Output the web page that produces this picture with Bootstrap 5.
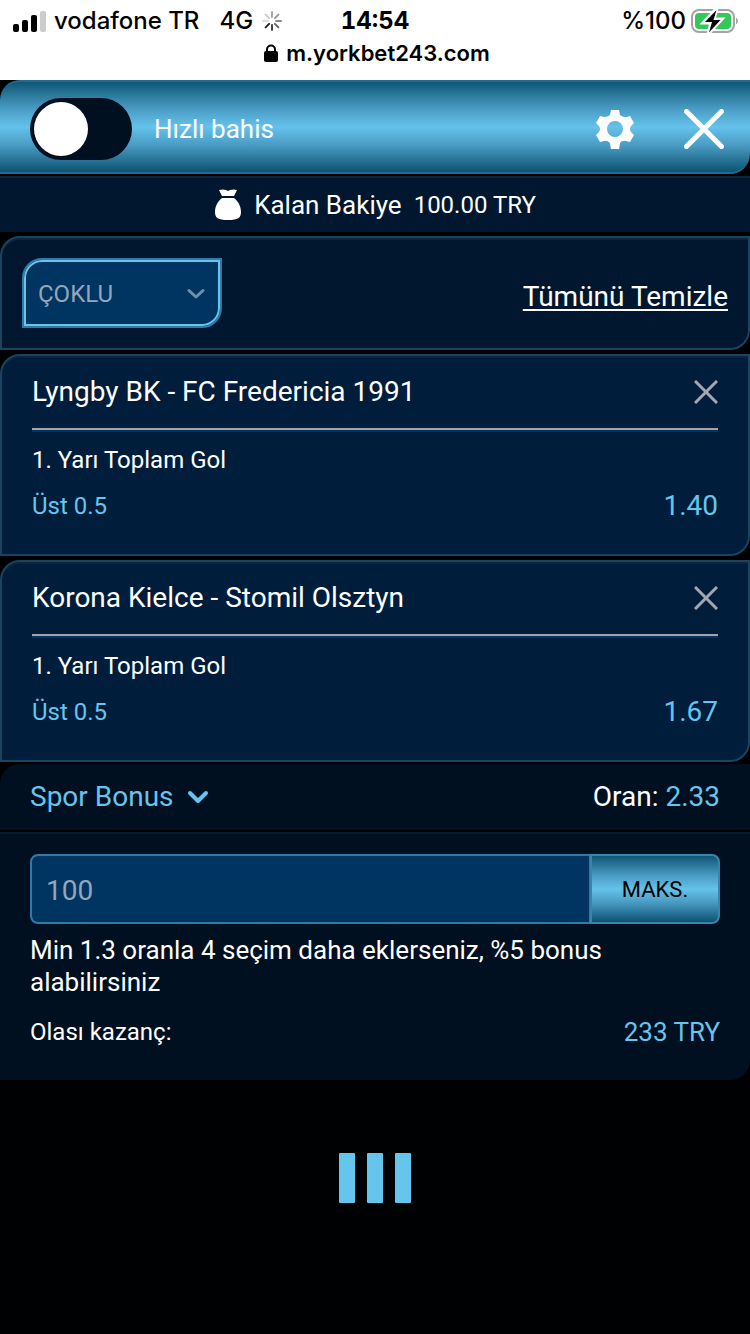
<!DOCTYPE html>
<html lang="tr">
<head>
<meta charset="utf-8">
<meta name="viewport" content="width=device-width, initial-scale=1">
<title>Kupon</title>
<link href="https://cdn.jsdelivr.net/npm/bootstrap@5.3.0/dist/css/bootstrap.min.css" rel="stylesheet">
<style>
:root { --accent: #66c5ed; --line: #1a435f; --field: #003562; --deep: #001021; --edge: #2f7aa6; }
body { background: #000103; color: #fff; font-family: Roboto, sans-serif; font-size: 24px; line-height: 32px; }
svg { display: block; flex: none; }
button { line-height: 32px; }
.fs-26 { font-size: 26px; }
.fs-28 { font-size: 28px; }
.corner { border-radius: 20px 0 20px 0; }
.plain-btn { background: none; border: 0; padding: 0; color: inherit; }
.text-accent { color: var(--accent); }

/* device status bar */
.device-bar { height: 80px; background: #fff; color: #000; font-family: Inter, sans-serif; font-weight: 500; }
.device-row { display: grid; grid-template-columns: 1fr auto 1fr; height: 42px; padding: 0 12px; }
.clock { font-weight: 700; font-variant-numeric: tabular-nums; }
.device-url { font-size: 22px; line-height: 22px; font-weight: 600; }

/* slip header */
.slip-head { height: 94px; padding: 4px 26px 0 30px; margin-bottom: 2px; border: 2px solid #226b90; border-width: 2px 0; background: linear-gradient(#0f5676, #4a9cc4 30%, #65c2eb 50%, #4a9cc4 70%, #0c5271); }
.quick-switch.form-check-input { width: 102px; height: 62px; margin: 0 22px 0 0; float: none; border: 0; border-radius: 31px; background-color: var(--deep); background-position: left center; background-size: 62px 62px; background-repeat: no-repeat; background-image: url("data:image/svg+xml,%3Csvg xmlns='http://www.w3.org/2000/svg' viewBox='0 0 62 62'%3E%3Ccircle cx='31' cy='31' r='27' fill='white'/%3E%3C/svg%3E") !important; }
.quick-switch.form-check-input:checked { background-position: right center; }
.head-actions { gap: 50px; }

.balance { height: 56px; gap: 12px; background: #00172f; border-top: 2px solid #10233f; }
.panel { border: 2px solid var(--line); box-shadow: inset 0 2px #10233f; background: #00172f; }
.tools { height: 114px; padding: 0 20px; }
.kind-select.form-select { width: 200px; height: 70px; padding: 2px 14px 0; font-size: 24px; color: #94a6ba; border: 2px solid #2f7aa6; border-radius: 20px 0 20px 0; box-shadow: inset 0 0 0 2px var(--accent); background-color: var(--field); background-size: 20px 20px; background-position: right 14px center; background-image: url("data:image/svg+xml,%3Csvg xmlns='http://www.w3.org/2000/svg' viewBox='0 0 20 20' fill='none' stroke='%23708fa9' stroke-width='3' stroke-linecap='round' stroke-linejoin='round'%3E%3Cpath d='M3 7.500l7 6.500 7-6.500'/%3E%3C/svg%3E"); }
.clear-link { padding-top: 8px; color: #fff; text-underline-offset: 3px; text-decoration-thickness: 2px; }

.match { background: #001e3b; padding: 0 30px 32px; }
.match-head { height: 74px; border-bottom: 2px solid #a3a3aa; box-shadow: 0 2px #003562; margin-bottom: 14px; }
.pick { margin-top: 14px; }
.dismiss { color: #a5a7b0; }

.summary { height: 66px; padding: 0 30px; margin: 2px 0; background: var(--deep); border-radius: 20px 0 0 0; }
.stake { background: var(--deep); border-top: 2px solid #001d35; border-radius: 0 0 20px 0; padding: 20px 30px 32px; }
.stake-input.form-control { height: 70px; padding: 2px 14px 0; font-size: 28px; color: #94a6ba; background: var(--field); border: 2px solid var(--edge); border-radius: 8px; }
.max-btn.btn { width: 130px; font-size: 22px; color: #000; border: 2px solid #3687ad; border-radius: 8px; background: linear-gradient(#0f5676, #4a9cc4 30%, #65c2eb 50%, #4a9cc4 70%, #0c5271); }
.bonus-note { margin: 10px 0 18px; }
.loader { margin-top: 73px; gap: 12px; }
.loader-bar { width: 16px; height: 50px; border-radius: 1px; background: var(--accent); }
</style>
</head>
<body>
<header class="device-bar">
  <div class="device-row align-items-center">
    <div class="d-flex align-items-center">
      <svg width="34" height="24" viewBox="0 0 34 24" aria-hidden="true"><rect x="1" y="15" width="6" height="8" rx="2"/><rect x="10" y="11" width="6" height="12" rx="2"/><rect x="19" y="6" width="6" height="17" rx="2"/><rect x="28" y="2" width="6" height="21" rx="2" fill="#ccc"/></svg>
      <span class="ms-2">vodafone TR</span>
      <span class="ms-3 ps-1">4G</span>
      <svg class="ms-2" width="22" height="22" viewBox="0 0 22 22" stroke-width="2" stroke-linecap="round" aria-hidden="true"><path d="M11 2v5" stroke="#aaa"/><path d="M17.400 4.600l-3.500 3.500" stroke="#999"/><path d="M20 11h-5" stroke="#888"/><path d="M17.400 17.400l-3.500-3.500" stroke="#666"/><path d="M11 20v-5" stroke="#444"/><path d="M4.600 17.400l3.500-3.500" stroke="#222"/><path d="M2 11h5" stroke="#ddd"/><path d="M4.600 4.600l3.500 3.500" stroke="#ccc"/></svg>
    </div>
    <div class="clock">14:54</div>
    <div class="d-flex align-items-center justify-content-end gap-1">
      <span>%100</span>
      <svg width="48" height="26" viewBox="0 0 48 26" aria-hidden="true"><rect x="2" y="2" width="42" height="22" rx="7" fill="none" stroke="#a4a4a4" stroke-width="2"/><rect x="5" y="5" width="36" height="16" rx="4" fill="#34c759"/><path d="M46 9.500q2 1.500 2 3.500t-2 3.500z" fill="#a4a4a4"/><path d="M26.500 1L14 14.500h7.500L18.500 25 31 11.500h-7.500z" stroke="#fff" stroke-width="4"/><path d="M26.500 2L15 14h7L19 24.500 30.500 12H23.500z"/></svg>
    </div>
  </div>
  <div class="device-url d-flex justify-content-center align-items-center gap-2 ps-1">
    <svg width="14" height="18" viewBox="0 0 14 18" aria-hidden="true"><rect y="7" width="14" height="11" rx="2"/><path d="M3 8V5.500a4 4 0 0 1 8 0V8" fill="none" stroke="#000" stroke-width="2"/></svg>
    <span>m.yorkbet243.com</span>
  </div>
</header>

<main>
  <section class="slip-head corner d-flex align-items-center">
    <input class="form-check-input quick-switch" type="checkbox" role="switch" id="quick">
    <label for="quick" class="fs-26 me-auto">Hızlı bahis</label>
    <div class="head-actions d-flex align-items-center">
      <button type="button" class="plain-btn" aria-label="Ayarlar">
        <svg width="38" height="40" viewBox="0 0 38 40"><path fill="#fff" fill-rule="evenodd" d="M15 1h8l1 5q4 3 7 2l3-1 4 7-3 3q-2 3 0 6l3 3-4 7-4-1q-4-1-6 2l-1 7h-8l-1-7q-3-3-6-2l-4 1-4-7 3-3q2-3 0-6l-3-3 4-7 4 1q4 0 6-2zM19 12a8 8 0 1 0 0 16 8 8 0 0 0 0-16z"/></svg>
      </button>
      <button type="button" class="plain-btn" aria-label="Kapat">
        <svg width="40" height="40" viewBox="0 0 40 40"><path d="M2.500 2.500l35 35M37.500 2.500l-35 35" stroke="#fff" stroke-width="5" stroke-linecap="round"/></svg>
      </button>
    </div>
  </section>

  <section class="balance d-flex align-items-center justify-content-center mb-1">
    <svg width="28" height="32" viewBox="0 0 28 32" fill="#fff" aria-hidden="true"><path d="M5 1q4-1 7 0l2 1 2-1q4-1 7 0l-3 6H8L5 1zM8 9h12c5 4 7 9 7 14 0 6-3 8-13 8S1 29 1 23C1 18 3 13 8 9z"/></svg>
    <span class="fs-26">Kalan Bakiye</span>
    <span>100.00 TRY</span>
  </section>

  <section class="panel tools corner d-flex align-items-center justify-content-between mb-1">
    <select class="form-select kind-select" aria-label="Kupon türü"><option>ÇOKLU</option><option>TEKLİ</option><option>SİSTEM</option></select>
    <a href="#" class="clear-link fs-28">Tümünü Temizle</a>
  </section>

  <article class="panel match corner mb-1">
    <div class="match-head d-flex align-items-center justify-content-between">
      <span class="fs-28">Lyngby BK - FC Fredericia 1991</span>
      <button type="button" class="plain-btn dismiss" aria-label="Sil"><svg width="24" height="24" viewBox="0 0 24 24"><path d="M1 1l22 22M23 1L1 23" stroke="currentColor" stroke-width="3"/></svg></button>
    </div>
    <div>1. Yarı Toplam Gol</div>
    <div class="pick d-flex justify-content-between align-items-center text-accent"><span>Üst 0.5</span><span class="fs-28">1.40</span></div>
  </article>

  <article class="panel match corner">
    <div class="match-head d-flex align-items-center justify-content-between">
      <span class="fs-28">Korona Kielce - Stomil Olsztyn</span>
      <button type="button" class="plain-btn dismiss" aria-label="Sil"><svg width="24" height="24" viewBox="0 0 24 24"><path d="M1 1l22 22M23 1L1 23" stroke="currentColor" stroke-width="3"/></svg></button>
    </div>
    <div>1. Yarı Toplam Gol</div>
    <div class="pick d-flex justify-content-between align-items-center text-accent"><span>Üst 0.5</span><span class="fs-28">1.67</span></div>
  </article>

  <section class="summary d-flex align-items-center justify-content-between">
    <button type="button" class="plain-btn text-accent fs-28 d-flex align-items-center">Spor Bonus
      <svg class="ms-3" width="20" height="14" viewBox="1 0 20 14" fill="none" stroke="currentColor" stroke-width="4" stroke-linecap="round" stroke-linejoin="round" overflow="visible" aria-hidden="true"><path d="M1 3l8 8 8-8"/></svg>
    </button>
    <span class="fs-28">Oran: <span class="text-accent">2.33</span></span>
  </section>

  <section class="stake">
    <div class="input-group">
      <input class="form-control stake-input" type="text" inputmode="decimal" value="100" aria-label="Bahis miktarı">
      <button class="btn max-btn" type="button">MAKS.</button>
    </div>
    <div class="fs-26 bonus-note">Min 1.3 oranla 4 seçim daha eklerseniz, %5 bonus alabilirsiniz</div>
    <div class="d-flex justify-content-between align-items-center"><span>Olası kazanç:</span><span class="fs-26 text-accent">233 TRY</span></div>
  </section>

  <div class="loader d-flex justify-content-center" role="status" aria-label="Yükleniyor">
    <span class="loader-bar"></span><span class="loader-bar"></span><span class="loader-bar"></span>
  </div>
</main>
<script src="https://cdn.jsdelivr.net/npm/bootstrap@5.3.0/dist/js/bootstrap.bundle.min.js"></script>
</body>
</html>
